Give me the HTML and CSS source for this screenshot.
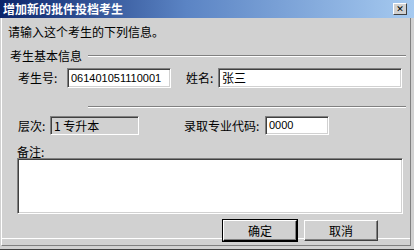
FILE: index.html
```html
<!DOCTYPE html>
<html lang="zh-CN">
<head>
    <meta charset="UTF-8">
    <title>增加新的批件投档考生</title>
    <link rel="stylesheet" href="styles.css">
</head>
<body>
    <div class="window">
        <div class="titlebar">
            <span class="title">增加新的批件投档考生</span>
            <span class="close">&#x2715;</span>
        </div>
        <div class="client">
            <p class="intro">请输入这个考生的下列信息。</p>
            <div class="group-head">
                <span>考生基本信息</span>
                <div class="etched"></div>
            </div>
            <div class="row row-first">
                <label class="lbl lbl-num">考生号:</label>
                <div class="field field-num">061401051110001</div>
                <label class="lbl lbl-name">姓名:</label>
                <div class="field field-name">张三</div>
            </div>
            <div class="etched sep"></div>
            <div class="row row-second">
                <label class="lbl lbl-level">层次:</label>
                <div class="field field-level">1 专升本</div>
                <label class="lbl lbl-code">录取专业代码:</label>
                <div class="field field-code">0000</div>
            </div>
            <label class="lbl lbl-note">备注:</label>
            <div class="field note"></div>
            <div class="buttons">
                <button class="btn btn-default">确定</button>
                <button class="btn">取消</button>
            </div>
        </div>
    </div>
</body>
</html>
```

FILE: styles.css
```css
body {
    margin: 0;
    background: #d1d1d1;
    font-family: "Noto Sans CJK SC", "Liberation Sans", sans-serif;
    font-size: 12px;
    color: #000;
}
.window {
    width: 414px;
    height: 250px;
    box-sizing: border-box;
    background: #d1d1d1;
    display: flex;
    flex-direction: column;
    border-bottom: 1px solid #404040;
}
.titlebar {
    height: 18px;
    display: flex;
    align-items: center;
    background: linear-gradient(to right, #0a246a 0%, #5b84c4 45%, #a6caf0 100%);
    padding-left: 3px;
}
.title {
    color: #fff;
    font-weight: bold;
    font-size: 12px;
    line-height: 18px;
}
.close {
    margin-left: auto;
    margin-right: 7px;
    width: 14px;
    height: 12px;
    box-sizing: border-box;
    background: #d1d1d1;
    border: 1px solid;
    border-color: #fff #404040 #404040 #fff;
    font-family: "DejaVu Sans", sans-serif;
    font-size: 9px;
    font-weight: bold;
    line-height: 10px;
    text-align: center;
    color: #000;
}
.client {
    flex: 1;
    margin: 0 3px 3px 1px;
    border-left: 1px solid #fff;
    border-right: 1px solid #808080;
    border-bottom: 1px solid #808080;
    box-shadow: inset 0 -6px 0 #d1d1d1, inset 0 -7px 0 #fff;
    padding-left: 1px;
}
.intro {
    margin: 7px 0 0 5px;
    line-height: 14px;
}
.group-head {
    margin-top: 10px;
    height: 14px;
    display: flex;
    align-items: center;
    padding-left: 7px;
}
.group-head span {
    line-height: 14px;
    margin-right: 6px;
}
.group-head .etched {
    flex: 1;
    margin-right: 4px;
}
.etched {
    height: 0;
    border-top: 1px solid #808080;
    border-bottom: 1px solid #fff;
}
.sep {
    margin: 18px 4px 0 85px;
}
.row {
    display: flex;
    align-items: center;
    padding-left: 15px;
}
.row-first {
    margin-top: 5px;
    height: 20px;
}
.row-second {
    margin-top: 8px;
    height: 19px;
}
.lbl {
    display: block;
    line-height: 14px;
}
.lbl-num { width: 49px; }
.lbl-name { width: 32px; margin-left: 15px; }
.lbl-level { width: 32px; }
.lbl-code { width: 81px; margin-left: 45px; }
.field {
    box-sizing: border-box;
    height: 100%;
    background: #fff;
    border: 1px solid;
    border-color: #808080 #fff #fff #808080;
    box-shadow: inset 1px 1px #404040, inset -1px -1px #d1d1d1;
    padding: 0 3px;
    font-family: "Liberation Sans", "Noto Sans CJK SC", sans-serif;
    font-size: 11px;
    line-height: 18px;
    white-space: nowrap;
}
.field-num { width: 104px; }
.field-name {
    width: 184px;
    font-family: "Noto Sans CJK SC", sans-serif;
    font-size: 12px;
}
.field-level {
    width: 89px;
    background: #d1d1d1;
    font-family: "Noto Sans CJK SC", sans-serif;
    font-size: 12px;
    line-height: 17px;
}
.field-code { width: 64px; line-height: 17px; }
.lbl-note {
    margin: 10px 0 0 14px;
    line-height: 13px;
}
.note {
    margin-left: 14px;
    width: 386px;
    height: 56px;
}
.buttons {
    display: flex;
    margin: 6px 0 0 220px;
    gap: 7px;
}
.btn {
    box-sizing: border-box;
    width: 74px;
    height: 21px;
    padding: 0;
    background: #d1d1d1;
    border: 1px solid;
    border-color: #fff #404040 #404040 #fff;
    box-shadow: inset -1px -1px #808080;
    font-family: "Noto Sans CJK SC", sans-serif;
    font-size: 12px;
    color: #000;
}
.btn-default {
    outline: 1px solid #000;
    outline-offset: 0;
    border-color: #fff #000 #000 #fff;
}
```
